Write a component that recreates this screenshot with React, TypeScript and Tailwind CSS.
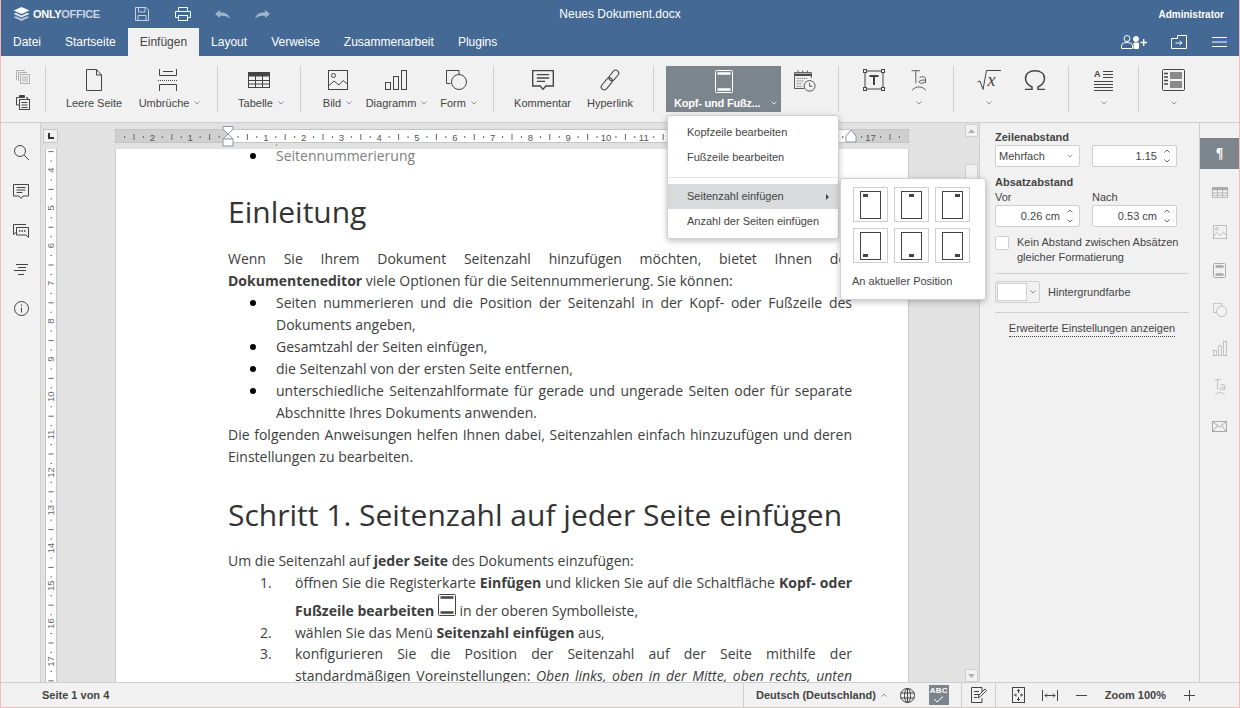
import React from "react";

const S = "#444444";
const Sv = ({ w, h, c = S, children, vb }: { w: number; h: number; c?: string; children: React.ReactNode; vb?: string }) => (
  <svg width={w} height={h} viewBox={vb ?? `0 0 ${w} ${h}`} preserveAspectRatio="none" fill="none" stroke={c} strokeWidth={1} className="shrink-0 block">
    {children}
  </svg>
);

const Caret = ({ up = false, c = "#777" }: { up?: boolean; c?: string }) => (
  <svg width="6" height="4" viewBox="0 0 6 4" fill="none" stroke={c} strokeWidth="0.8" className="shrink-0 block">
    <path d={up ? "M0.5 3.5L3 1L5.5 3.5" : "M0.5 .5L3 3L5.5 .5"} />
  </svg>
);

const PageIcon = () => (
  <Sv w={16} h={22}><path d="M.5.5H10.5L15.5 6V21.5H.5Z" /><path d="M10.5.5V6H15.5" /></Sv>
);
const BreaksIcon = () => (
  <Sv w={20} h={22}>
    <path d="M1.5 0V6.5H18.5V0M5 2.5H15" />
    <path d="M0 11.5H20" strokeDasharray="1 1" />
    <path d="M1.5 22V15.5H18.5V22" />
  </Sv>
);
const TableIcon = ({ c = S, w = 22, h = 16 }: { c?: string; w?: number; h?: number }) => (
  <Sv w={w} h={h} c={c} vb="0 0 22 16">
    <rect x=".5" y=".5" width="21" height="15" />
    <path d="M0 2.5H22" strokeWidth="4" />
    <path d="M0 8.5H22M0 12H22M7.5 4V16M14.5 4V16" />
  </Sv>
);
const ImageIcon = ({ c = S, s = 20 }: { c?: string; s?: number }) => (
  <Sv w={s} h={s} c={c} vb="0 0 20 20">
    <rect x=".5" y=".5" width="19" height="19" />
    <circle cx="5.5" cy="5.5" r="2" />
    <path d="M.5 16L6 11L11 15L15 10.5L19.5 14" />
  </Sv>
);
const ChartIcon = ({ c = S, w = 22, h = 20 }: { c?: string; w?: number; h?: number }) => (
  <Sv w={w} h={h} c={c} vb="0 0 22 20">
    <rect x=".5" y="12.5" width="5" height="7" />
    <rect x="8.5" y="6.5" width="5" height="13" />
    <rect x="16.5" y=".5" width="5" height="19" />
  </Sv>
);
const ShapeIcon = ({ c = S, w = 21, h = 20 }: { c?: string; w?: number; h?: number }) => (
  <Sv w={w} h={h} c={c} vb="0 0 21 20">
    <path d="M4.5 13.5H.5V.5H13V4" />
    <circle cx="13" cy="12" r="7.5" />
  </Sv>
);
const CommentIcon = ({ w = 16, h = 15 }: { w?: number; h?: number }) => (
  <Sv w={w} h={h} vb="0 0 16 15">
    <path d="M.5.5H15.5V12H10L8 14.5L6 12H.5Z" />
    <path d="M3.5 3.5H12.5M3.5 6H12.5M3.5 8.5H9.5" />
  </Sv>
);
const LinkIcon = () => (
  <svg width="18" height="18" viewBox="0 0 18 18" fill="none" stroke="#444" className="shrink-0 block overflow-visible">
    <g transform="rotate(40 9 9)">
      <rect x="6" y="-3" width="6" height="12" rx="3" />
      <rect x="6" y="7" width="6" height="14" rx="3" />
    </g>
  </svg>
);
const HeaderIcon = ({ c = S, w = 18, h = 23 }: { c?: string; w?: number; h?: number }) => (
  <Sv w={w} h={h} c={c}>
    <rect x=".5" y=".5" width={w - 1} height={h - 1} rx="1" />
    <path d={`M2.5 3.5H${w - 2.5}M2.5 ${h - 3.5}H${w - 2.5}`} strokeWidth="2.5" />
  </Sv>
);
const DateIcon = () => (
  <Sv w={22} h={22} vb="0 0 24 25">
    <path d="M11 21H.5V3H19V9" />
    <path d="M1 5.5H19" strokeWidth="2.5" />
    <path d="M3 9.5H14M3 12.5H11M3 15.5H9M3 18.5H9" strokeDasharray="1 1" />
    <path d="M4.5 .5V3M9.5 .5V3M14.5 .5V3" />
    <circle cx="17" cy="18" r="6" fill="#f1f1f1" />
    <path d="M17 14.5V18.5H20" />
  </Sv>
);
const TextBoxIcon = () => (
  <Sv w={22} h={22}>
    <rect x="2" y="2" width="18" height="18" />
    <rect x=".5" y=".5" width="3" height="3" fill="#f1f1f1" />
    <rect x="18.5" y=".5" width="3" height="3" fill="#f1f1f1" />
    <rect x=".5" y="18.5" width="3" height="3" fill="#f1f1f1" />
    <rect x="18.5" y="18.5" width="3" height="3" fill="#f1f1f1" />
    <path d="M6.5 7H15.5M11 7V16" strokeWidth="2" />
  </Sv>
);
const TaIcon = ({ c = S, w = 16, h = 21 }: { c?: string; w?: number; h?: number }) => (
  <Sv w={w} h={h} c={c} vb="0 0 16 30">
    <path d="M.5 1H9M4.8 1V19" />
    <path d="M14.5 18.5V12C14.5 9 9 9 8.5 11.5M14.5 14.5C11 14 8 15 8 17C8 19.5 13 19.5 14.5 16.5" />
    <path d="M1 29C5 22.5 11 22.5 15 29" />
  </Sv>
);
const SqrtIcon = () => (
  <svg width="24" height="20" viewBox="0 0 24 20" fill="none" stroke="#444" className="shrink-0 block">
    <path d="M.5 12L3 11L6 19.5L9.5 .5H24" />
    <text x="10.5" y="16" fontSize="18" fontStyle="italic" fontFamily="'Liberation Serif', serif" fill="#444" stroke="none">x</text>
  </svg>
);
const OmegaIcon = () => (
  <Sv w={22} h={20}>
    <path d="M1 19.5H8V17C4 15 1.5 12.5 1.5 8.5C1.5 3.5 5.5 .8 11 .8C16.5 .8 20.5 3.5 20.5 8.5C20.5 12.5 18 15 14 17V19.5H21" strokeWidth="1.5" />
  </Sv>
);
const ColumnsIcon = () => (
  <Sv w={23} h={22}>
    <rect x=".5" y=".5" width="22" height="21" rx="1" />
    <rect x="8" y="3" width="12" height="7" fill="#8a8a8a" stroke="none" />
    <rect x="8" y="12" width="12" height="7" fill="#8a8a8a" stroke="none" />
    <path d="M2 4.5H6M2 8H6M2 11.5H6M2 15H6" strokeWidth="1.5" />
  </Sv>
);
const LinesIcon = () => (
  <Sv w={21} h={21}>
    <path d="M10 1.5H20M10 4.5H20M10 7.5H20M1 11.5H20M1 14.5H20M1 17.5H20M1 20.5H20" />
  </Sv>
);

const Btn = ({ icon, label, cls, caret, iconCls = "" }: { icon: React.ReactNode; label?: string; cls: string; caret?: boolean; iconCls?: string }) => (
  <div className={"flex flex-col items-center shrink-0 " + cls}>
    <div className={"flex items-center justify-center w-full h-[28px] " + iconCls}>{icon}</div>
    <div className="flex items-center gap-[5px] h-[14px] mt-[2px] whitespace-nowrap text-[11px] leading-[14px] text-[#444]">
      {label && <span>{label}</span>}
      {caret && <Caret />}
    </div>
  </div>
);

const Sep = () => <div className="w-px h-[46px] bg-[#cfcfcf] shrink-0" />;

const HRuler = () => {
  const ticks: React.ReactNode[] = [];
  const o = 112;
  const u = 37.8;
  for (let i = -3; i < 18; i++) {
    const x = o + i * u;
    if (i !== 0 && i >= -2) {
      ticks.push(
        <text key={"n" + i} x={x} y={10.5} textAnchor="middle" fontSize="9.5" fill="#555" stroke="none" fontFamily="'Liberation Sans', sans-serif">
          {Math.abs(i)}
        </text>
      );
    }
    [0.25, 0.75].forEach((f) => ticks.push(<rect key={`d${i}${f}`} x={x + f * u} y={6} width={1} height={2} fill="#666" stroke="none" />));
    ticks.push(<rect key={`b${i}`} x={x + 0.5 * u} y={4} width={1} height={6} fill="#666" stroke="none" />);
  }
  return (
    <div className="relative h-[14px] w-[794px] bg-[#d0d0d0] border border-[#c4c4c4]">
      <div className="absolute left-[112px] top-0 bottom-0 w-[624px] bg-white" />
      <svg width="792" height="12" className="absolute left-0 top-0 overflow-visible" fill="none">
        <clipPath id="rc"><rect x="0" y="0" width="792" height="12" /></clipPath>
        <g clipPath="url(#rc)">{ticks}</g>
        <path d="M107 -3.5H117V-1L112 4L107 -1Z" fill="#fff" stroke="#8e97a3" />
        <path d="M112 4L117 9H107Z" fill="#fff" stroke="#8e97a3" />
        <rect x="107" y="9" width="10" height="7" fill="#fff" stroke="#8e97a3" />
        <path d="M735 0L740 6V12H730V6Z" fill="#fff" stroke="#8e97a3" />
        <rect x="160" y="14" width="1" height="2" fill="#8e97a3" />
      </svg>
    </div>
  );
};

const VRuler = () => {
  const items: React.ReactNode[] = [];
  const u = 37.8;
  for (let i = 3; i < 19; i++) {
    const y = (i - 4) * u + 21;
    items.push(
      <text key={"t" + i} x={5} y={y + 3} textAnchor="middle" fontSize="9.5" fill="#666" transform={`rotate(-90 5 ${y})`} fontFamily="'Liberation Sans', sans-serif">
        {i}
      </text>
    );
    items.push(<rect key={"a" + i} x={2.5} y={y + 0.5 * u} width={5} height={1} fill="#666" />);
    items.push(<rect key={"b" + i} x={4.5} y={y + 0.25 * u} width={1.5} height={1} fill="#666" />);
    items.push(<rect key={"c" + i} x={4.5} y={y + 0.75 * u} width={1.5} height={1} fill="#666" />);
  }
  return (
    <div className="w-[12px] h-[533px] bg-white border-x border-[#c4c4c4]">
      <svg width="10" height="533" className="block">{items}</svg>
    </div>
  );
};

const B = ({ children }: { children: React.ReactNode }) => <b className="font-bold">{children}</b>;

const Li = ({ children, cls = "" }: { children: React.ReactNode; cls?: string }) => (
  <div className={"flex " + cls}>
    <div className="w-[48px] pl-[22px] shrink-0 flex">
      <span className="w-[6px] h-[6px] rounded-full bg-black mt-[8px]" />
    </div>
    <div className="text-justify w-[576px]">{children}</div>
  </div>
);
const Ol = ({ n, children, cls = "" }: { n: string; children: React.ReactNode; cls?: string }) => (
  <div className={"flex " + cls}>
    <div className="w-[67px] pl-[32px] shrink-0">{n}</div>
    <div className="text-justify w-[557px]">{children}</div>
  </div>
);

const PageTile = ({ pos, bottom }: { pos: "l" | "c" | "r"; bottom?: boolean }) => {
  const x = pos === "l" ? 3 : pos === "c" ? 8 : 13;
  return (
    <div className="w-[35px] h-[35px] border border-[#cfcfcf] flex items-center justify-center">
      <svg width="21" height="28" viewBox="0 0 21 28" fill="none" stroke="#444">
        <rect x=".5" y=".5" width="20" height="27" />
        <rect x={x} y={bottom ? 22 : 3} width="5" height="3" fill="#444" stroke="none" />
      </svg>
    </div>
  );
};

const Spinner = () => (
  <div className="flex flex-col gap-[6px] items-center">
    <Caret up c="#444" />
    <Caret c="#444" />
  </div>
);
const NumInput = ({ v }: { v: string }) => (
  <div className="w-[85px] h-[22px] bg-white border border-[#cfcfcf] rounded-[2px] flex items-center justify-end pr-[6px] gap-[7px] text-[11px] text-[#444]">
    <span>{v}</span>
    <Spinner />
  </div>
);

const Slot = ({ children }: { children: React.ReactNode }) => <div className="h-[39px] flex items-center justify-center shrink-0">{children}</div>;

export default function App() {
  return (
    <div className="w-[1240px] h-[708px] flex flex-col overflow-hidden relative bg-[#f1f1f1] font-['Liberation_Sans',Arial,sans-serif] border-x border-b border-[#f9b9b4] box-border">
      {/* header */}
      <div className="h-[56px] bg-[#446995] shrink-0 text-white">
        <div className="h-[28px] flex items-center relative">
          <div className="flex items-center ml-[12px] gap-[3px] w-[90px]">
            <svg width="17" height="14" viewBox="0 0 17 15" className="shrink-0">
              <path d="M8.5 0L17 3.8L8.5 7.6L0 3.8Z" fill="#fff" />
              <path d="M2.5 6.2L8.5 9L14.5 6.2L17 7.4L8.5 11.2L0 7.4Z" fill="#dfe6ee" />
              <path d="M2.5 9.8L8.5 12.6L14.5 9.8L17 11L8.5 15L0 11Z" fill="#b9c7d8" />
            </svg>
            <span className="text-[11px] font-bold tracking-[-0.3px] whitespace-nowrap">ONLY<span className="text-[#c9d4e2]">OFFICE</span></span>
          </div>
          <div className="ml-[27px] w-[24px] flex justify-center">
            <Sv w={14} h={14} c="#c7d2e0"><path d="M.5.5H11L13.5 3V13.5H.5Z" /><path d="M3.5.5V5H10V.5M3 13.5V8.5H11V13.5" /></Sv>
          </div>
          <div className="ml-[17px] w-[24px] flex justify-center">
            <Sv w={16} h={14} c="#fff"><path d="M3.5 4V.5H12.5V4M3.5 10.5H.5V4.5H15.5V10.5H12.5" /><rect x="3.5" y="8.5" width="9" height="5" /></Sv>
          </div>
          <div className="ml-[15px] w-[24px] flex justify-center">
            <svg width="15" height="9" viewBox="0 0 15 9" fill="#9fb3cb"><path d="M0 4L5 0V2.5C10 2 14 4 15 9C12.5 6 9 5.5 5 6V8Z" /></svg>
          </div>
          <div className="ml-[16px] w-[24px] flex justify-center">
            <svg width="15" height="9" viewBox="0 0 15 9" fill="#9fb3cb"><path d="M15 4L10 0V2.5C5 2 1 4 0 9C2.5 6 6 5.5 10 6V8Z" /></svg>
          </div>
          <div className="absolute left-0 right-0 text-center text-[12px] pointer-events-none">Neues Dokument.docx</div>
          <div className="ml-auto mr-[15px] text-[10px] font-bold">Administrator</div>
        </div>
        <div className="h-[28px] flex items-stretch text-[12px]">
          {["Datei", "Startseite", "Einfügen", "Layout", "Verweise", "Zusammenarbeit", "Plugins"].map((t) => (
            <div key={t} className={"px-[12px] flex items-center " + (t === "Einfügen" ? "bg-[#f1f1f1] text-[#444]" : "")}>{t}</div>
          ))}
          <div className="ml-auto flex items-center pr-[12px]">
            <svg width="26" height="14" viewBox="0 0 26 14" fill="none" stroke="#fff" className="mr-[24px]">
              <circle cx="6" cy="3.5" r="3" />
              <path d="M.5 13.5V11C.5 8.5 3 7.5 6 7.5C9 7.5 11.5 8.5 11.5 11V13.5Z" />
              <circle cx="15" cy="4" r="2.5" fill="#fff" />
              <path d="M13 13.5V8H17.5V13.5Z" fill="#fff" />
              <path d="M19.5 7.5H26M22.7 4V11" strokeWidth="1.4" />
            </svg>
            <svg width="16" height="14" viewBox="0 0 16 14" fill="none" stroke="#fff" className="mr-[25px]">
              <path d="M.5 3.5V13.5H15.5V.5H6.5V3.5Z" />
              <path d="M4.5 8H10.5M8.5 6L11 8L8.5 10" />
            </svg>
            <svg width="15" height="12" viewBox="0 0 15 12" fill="none" stroke="#fff">
              <path d="M0 1.5H15M0 6H15M0 10.5H15" />
            </svg>
          </div>
        </div>
      </div>

      {/* toolbar */}
      <div className="h-[67px] shrink-0 flex items-start pt-[10px] border-b border-[#cfcfcf] text-[#444]">
        <div className="w-[44px] h-[46px] flex flex-col items-center pt-[4px] gap-[11px] shrink-0">
          <Sv w={14} h={14} c="#b0b0b0"><path d="M.5 10V.5H9" /><path d="M2.5 11V2.5H11" /><rect x="4.5" y="4.5" width="9" height="9" /><path d="M6 7H12M6 9H12M6 11H12" /></Sv>
          <Sv w={14} h={15}><path d="M3.5 10H.5V2.5H3M10 2.5H11.5V4" /><path d="M3.5 2V.5H8.5V2.5H3.5Z" fill="#444" /><rect x="3.5" y="4.5" width="10" height="10" /><path d="M5.5 7.5H11.5M5.5 10H11.5M5.5 12.5H11.5" /></Sv>
        </div>
        <Sep />
        <div className="w-[171px] flex pl-[20px] gap-[17px] shrink-0">
          <Btn cls="w-[56px]" icon={<PageIcon />} label="Leere Seite" />
          <Btn cls="w-[61px]" iconCls="pr-[3px]" icon={<BreaksIcon />} label="Umbrüche" caret />
        </div>
        <Sep />
        <div className="w-[82px] flex pl-[20px] shrink-0">
          <Btn cls="w-[46px]" iconCls="pr-[4px]" icon={<TableIcon />} label="Tabelle" caret />
        </div>
        <Sep />
        <div className="w-[192px] flex pl-[22px] shrink-0">
          <Btn cls="w-[29px]" icon={<ImageIcon />} label="Bild" caret />
          <Btn cls="w-[61px] ml-[14px]" iconCls="pr-[2px]" icon={<ChartIcon />} label="Diagramm" caret />
          <Btn cls="w-[37px] ml-[13px]" iconCls="pr-[4px]" icon={<ShapeIcon />} label="Form" caret />
        </div>
        <Sep />
        <div className="w-[159px] flex pl-[20px] gap-[16px] shrink-0">
          <Btn cls="w-[57px]" icon={<CommentIcon w={22} h={20} />} label="Kommentar" />
          <Btn cls="w-[46px]" icon={<LinkIcon />} label="Hyperlink" />
        </div>
        <Sep />
        <div className="w-[184px] flex pl-[12px] shrink-0">
          <div className="w-[115px] h-[46px] bg-[#7d858c] flex flex-col">
            <div className="h-[30px] flex items-center justify-center pl-px"><HeaderIcon c="#fff" /></div>
            <div className="flex items-center justify-between h-[14px] pl-[8px] pr-[4px] text-[11px] tracking-[-0.2px] font-bold text-white">
              <span>Kopf- und Fußz...</span>
              <Caret c="#fff" />
            </div>
          </div>
          <div className="w-[48px] flex justify-center pt-[4px]"><DateIcon /></div>
        </div>
        <Sep />
        <div className="w-[114px] flex pl-[24px] gap-[26px] shrink-0">
          <Btn cls="w-[22px]" icon={<TextBoxIcon />} />
          <Btn cls="w-[16px]" icon={<TaIcon />} caret />
        </div>
        <Sep />
        <div className="w-[114px] flex pl-[23px] gap-[23px] shrink-0">
          <Btn cls="w-[24px]" icon={<SqrtIcon />} caret />
          <Btn cls="w-[22px]" icon={<OmegaIcon />} />
        </div>
        <Sep />
        <div className="w-[69px] flex pl-[24px] shrink-0">
          <div className="relative">
            <Btn cls="w-[21px]" icon={<LinesIcon />} caret />
            <span className="absolute left-[1px] top-[3px] text-[9px] font-bold leading-[10px]">A</span>
          </div>
        </div>
        <Sep />
        <div className="w-[70px] flex pl-[23px] shrink-0">
          <Btn cls="w-[23px]" icon={<ColumnsIcon />} caret />
        </div>
      </div>

      {/* main */}
      <div className="flex-1 min-h-0 flex">
        {/* left bar */}
        <div className="w-[40px] shrink-0 border-r border-[#cfcfcf] flex flex-col pt-[10px] pl-[1px]">
          <Slot><Sv w={15} h={15}><circle cx="6" cy="6" r="5.5" /><path d="M10 10L15 15" /></Sv></Slot>
          <Slot><CommentIcon w={16} h={15} /></Slot>
          <Slot><Sv w={16} h={14}><path d="M13 .5H.5V10.5L3.5 8" /><path d="M3.5 3.5H15.5V13.5L13 11H3.5Z" /><path d="M6 7H7.5M8.5 7H10M11 7H12.5" strokeWidth="1.5" /></Sv></Slot>
          <Slot><Sv w={14} h={11}><path d="M2 .5H14M4 3.5H12M0 6.5H12M4 10.5H10" /></Sv></Slot>
          <Slot><Sv w={15} h={15}><circle cx="7.5" cy="7.5" r="7" /><path d="M7.5 6.5V11.5M7.5 3.5V5" /></Sv></Slot>
        </div>

        {/* document */}
        <div className="flex-1 min-w-0 bg-[#e2e2e2] relative overflow-hidden border-r border-[#cfcfcf] flex pt-[6px]">
          <div className="w-[17px] shrink-0 flex flex-col">
            <div className="ml-[2px] h-[14px] w-[15px] bg-[#f1f1f1] border border-[#c4c4c4] flex items-center justify-center">
              <svg width="6" height="6" viewBox="0 0 6 6"><path d="M0 0H2V4H6V6H0Z" fill="#333" /></svg>
            </div>
            <div className="mt-[6px] ml-[4px]"><VRuler /></div>
          </div>
          <div className="ml-[57px] w-[794px] shrink-0 flex flex-col">
            <HRuler />
            <div className="mt-[6px] flex-1 bg-white border-x border-[#c5c9d2] overflow-hidden pl-[112px] pr-[56px] text-[14px] leading-[22px] text-[#3d3d3d] font-['Open_Sans',sans-serif]">
              <Li cls="text-[#808080] -mt-[4px] h-[22px]"><span>Seitennummerierung</span></Li>
              <div className="text-[30px] leading-[44px] mt-[23px] mb-[14px] text-[#333]">Einleitung</div>
              <div className="text-justify">Wenn Sie Ihrem Dokument Seitenzahl hinzufügen möchten, bietet Ihnen der <B>Dokumenteneditor</B> viele Optionen für die Seitennummerierung. Sie können:</div>
              <Li>Seiten nummerieren und die Position der Seitenzahl in der Kopf- oder Fußzeile des Dokuments angeben,</Li>
              <Li>Gesamtzahl der Seiten einfügen,</Li>
              <Li>die Seitenzahl von der ersten Seite entfernen,</Li>
              <Li>unterschiedliche Seitenzahlformate für gerade und ungerade Seiten oder für separate Abschnitte Ihres Dokuments anwenden.</Li>
              <div className="text-justify">Die folgenden Anweisungen helfen Ihnen dabei, Seitenzahlen einfach hinzuzufügen und deren Einstellungen zu bearbeiten.</div>
              <div className="text-[30px] leading-[44px] mt-[25px] mb-[13px] text-[#333] whitespace-nowrap">Schritt 1. Seitenzahl auf jeder Seite einfügen</div>
              <div>Um die Seitenzahl auf <B>jeder Seite</B> des Dokuments einzufügen:</div>
              <Ol n="1.">
                öffnen Sie die Registerkarte <B>Einfügen</B> und klicken Sie auf die Schaltfläche <B>Kopf- oder Fußzeile bearbeiten</B>{" "}
                <span className="inline-block"><HeaderIcon w={18} h={22} /></span>{" "}in der oberen Symbolleiste,
              </Ol>
              <Ol n="2.">wählen Sie das Menü <B>Seitenzahl einfügen</B> aus,</Ol>
              <Ol n="3." cls="-mt-[1px]">konfigurieren Sie die Position der Seitenzahl auf der Seite mithilfe der standardmäßigen Voreinstellungen: <i>Oben links, oben in der Mitte, oben rechts, unten links, unten in der Mitte, unten rechts.</i></Ol>
            </div>
          </div>
          {/* scrollbar */}
          <div className="ml-[56px] -mt-[6px] w-[13px] shrink-0 flex flex-col">
            <div className="h-[13px] mt-px bg-[#f1f1f1] border border-[#cfcfcf] flex items-center justify-center">
              <svg width="7" height="4"><path d="M0 4L3.5 0L7 4Z" fill="#b0b0b0" /></svg>
            </div>
            <div className="h-[40px] mt-[27px] bg-[#f1f1f1] border border-[#cfcfcf]" />
            <div className="h-[13px] mt-auto bg-[#f1f1f1] border border-[#cfcfcf] flex items-center justify-center">
              <svg width="7" height="4"><path d="M0 0L3.5 4L7 0Z" fill="#b0b0b0" /></svg>
            </div>
          </div>
        </div>

        {/* right panel */}
        <div className="w-[220px] shrink-0 border-r border-[#cfcfcf] pl-[15px] pr-[10px] text-[11px] text-[#444] flex flex-col">
          <div className="font-bold leading-[14px] mt-[7px]">Zeilenabstand</div>
          <div className="flex justify-between w-[182px] mt-[1px]">
            <div className="w-[85px] h-[22px] bg-white border border-[#cfcfcf] rounded-[2px] flex items-center justify-between px-[3px] pr-[6px]"><span>Mehrfach</span><Caret c="#888" /></div>
            <NumInput v="1.15" />
          </div>
          <div className="font-bold leading-[14px] mt-[8px]">Absatzabstand</div>
          <div className="flex w-[182px] justify-between leading-[14px] mt-[1px]"><span className="w-[85px]">Vor</span><span className="w-[85px]">Nach</span></div>
          <div className="flex justify-between w-[182px] mt-[1px]">
            <NumInput v="0.26 cm" />
            <NumInput v="0.53 cm" />
          </div>
          <div className="flex mt-[9px]">
            <div className="w-[14px] h-[14px] bg-white border border-[#cfcfcf] rounded-[2px] shrink-0" />
            <div className="ml-[8px] leading-[15px] whitespace-nowrap -mt-[1px]">Kein Abstand zwischen Absätzen<br />gleicher Formatierung</div>
          </div>
          <div className="h-px bg-[#cfcfcf] mt-[8px]" />
          <div className="flex items-center mt-[7px]">
            <div className="w-[45px] h-[22px] border border-[#cfcfcf] rounded-[2px] bg-[#f1f1f1] flex items-center p-[1px]">
              <div className="w-[30px] h-[18px] bg-white border border-[#cfcfcf]" />
              <div className="flex-1 flex justify-center"><Caret /></div>
            </div>
            <span className="ml-[8px]">Hintergrundfarbe</span>
          </div>
          <div className="h-px bg-[#cfcfcf] mt-[9px]" />
          <div className="flex justify-center mt-[8px]">
            <span className="border-b border-dotted border-[#444] leading-[14px] pb-[1px]">Erweiterte Einstellungen anzeigen</span>
          </div>
        </div>

        {/* right bar */}
        <div className="w-[39px] shrink-0 flex flex-col pt-[15px]">
          <div className="h-[31px] mb-[4px] bg-[#7d858c] text-white font-bold text-[14px] flex items-center justify-center font-['Liberation_Serif',serif]">¶</div>
          <Slot><TableIcon c="#a8a8a8" w={16} h={11} /></Slot>
          <Slot><ImageIcon c="#a8a8a8" s={14} /></Slot>
          <Slot><HeaderIcon c="#a8a8a8" w={13} h={15} /></Slot>
          <Slot><ShapeIcon c="#a8a8a8" w={14} h={14} /></Slot>
          <Slot><ChartIcon c="#a8a8a8" w={14} h={15} /></Slot>
          <Slot><TaIcon c="#a8a8a8" w={12} h={17} /></Slot>
          <Slot>
            <Sv w={15} h={11} c="#a8a8a8"><rect x=".5" y=".5" width="14" height="10" /><path d="M.5.5L7.5 6L14.5.5M.5 10.5L5.5 4.5M14.5 10.5L9.5 4.5" /></Sv>
          </Slot>
        </div>
      </div>

      {/* status */}
      <div className="h-[25px] shrink-0 border-t border-[#cfcfcf] flex items-center text-[11px] font-bold text-[#444]">
        <span className="ml-[41px] w-[701px]">Seite 1 von 4</span>
        <div className="w-px h-[24px] bg-[#cfcfcf]" />
        <span className="ml-[12px] whitespace-nowrap">Deutsch (Deutschland)</span>
        <span className="ml-[5px]"><Caret up /></span>
        <svg width="15" height="15" viewBox="0 0 15 15" fill="none" stroke="#444" className="ml-[13px] shrink-0">
          <circle cx="7.5" cy="7.5" r="7" />
          <ellipse cx="7.5" cy="7.5" rx="3" ry="7" />
          <path d="M.5 5H14.5M.5 10H14.5M7.5 .5V14.5" />
        </svg>
        <div className="ml-[14px] w-[20px] h-[20px] bg-[#7d858c] flex flex-col items-center text-white">
          <span className="text-[8px] leading-[10px] font-bold tracking-[0.3px] mt-px">ABC</span>
          <svg width="11" height="7" viewBox="0 0 11 7" fill="none" stroke="#fff"><path d="M1 3L4 6L10 0.5" /></svg>
        </div>
        <div className="ml-[12px] w-px h-[24px] bg-[#cfcfcf]" />
        <svg width="16" height="16" viewBox="0 0 16 16" fill="none" stroke="#444" className="ml-[9px] shrink-0">
          <path d="M11 5V.5H.5V15.5H11V11" />
          <path d="M3 4.5H8M3 7.5H8M3 10.5H6" />
          <path d="M7 11L8 8L14 2L15.5 3.5L9.5 9.5Z" />
        </svg>
        <div className="ml-[8px] w-px h-[24px] bg-[#cfcfcf]" />
        <svg width="13" height="16" viewBox="0 0 13 16" fill="none" stroke="#444" className="ml-[16px] shrink-0">
          <rect x=".5" y=".5" width="12" height="15" />
          <path d="M6.5 2.5V6M5 4L6.5 2.5L8 4M6.5 13.5V10M5 12L6.5 13.5L8 12M2.5 8H5M4 6.5L2.5 8L4 9.5M10.5 8H8M9 6.5L10.5 8L9 9.5" />
        </svg>
        <svg width="16" height="11" viewBox="0 0 16 11" fill="none" stroke="#444" className="ml-[17px] shrink-0">
          <path d="M.5 0V11M15.5 0V11M3 5.5H13M5 3.5L3 5.5L5 7.5M11 3.5L13 5.5L11 7.5" />
        </svg>
        <svg width="11" height="1" viewBox="0 0 11 1" stroke="#444" className="ml-[18px] shrink-0"><path d="M0 .5H11" /></svg>
        <span className="ml-[18px] whitespace-nowrap">Zoom 100%</span>
        <svg width="11" height="11" viewBox="0 0 11 11" stroke="#444" className="ml-[18px] shrink-0"><path d="M0 5.5H11M5.5 0V11" /></svg>
      </div>

      {/* header/footer menu */}
      <div className="absolute left-[666px] top-[115px] w-[172px] h-[124px] bg-white border border-[#cfcfcf] rounded-[3px] shadow-[0_2px_6px_rgba(0,0,0,0.25)] text-[11px] text-[#444] pt-[4px]">
        <div className="h-[25px] pl-[19px] flex items-center">Kopfzeile bearbeiten</div>
        <div className="h-[25px] pl-[19px] flex items-center">Fußzeile bearbeiten</div>
        <div className="h-px bg-[#e4e4e4] mt-[7px] mb-[6px]" />
        <div className="h-[25px] pl-[19px] pr-[9px] flex items-center justify-between bg-[#d8dadc]">
          <span>Seitenzahl einfügen</span>
          <svg width="3" height="6"><path d="M0 0L3 3L0 6Z" fill="#444" /></svg>
        </div>
        <div className="h-[25px] pl-[19px] flex items-center">Anzahl der Seiten einfügen</div>
      </div>
      <div className="absolute left-[839px] top-[178px] w-[146px] h-[122px] bg-white border border-[#cfcfcf] rounded-[3px] shadow-[0_2px_6px_rgba(0,0,0,0.25)] text-[11px] text-[#444] pl-[12px] pt-[8px]">
        <div className="grid grid-cols-[35px_35px_35px] gap-x-[6px] gap-y-[6px]">
          <PageTile pos="l" />
          <PageTile pos="c" />
          <PageTile pos="r" />
          <PageTile pos="l" bottom />
          <PageTile pos="c" bottom />
          <PageTile pos="r" bottom />
        </div>
        <div className="mt-[11px] -ml-px leading-[14px]">An aktueller Position</div>
      </div>
    </div>
  );
}
